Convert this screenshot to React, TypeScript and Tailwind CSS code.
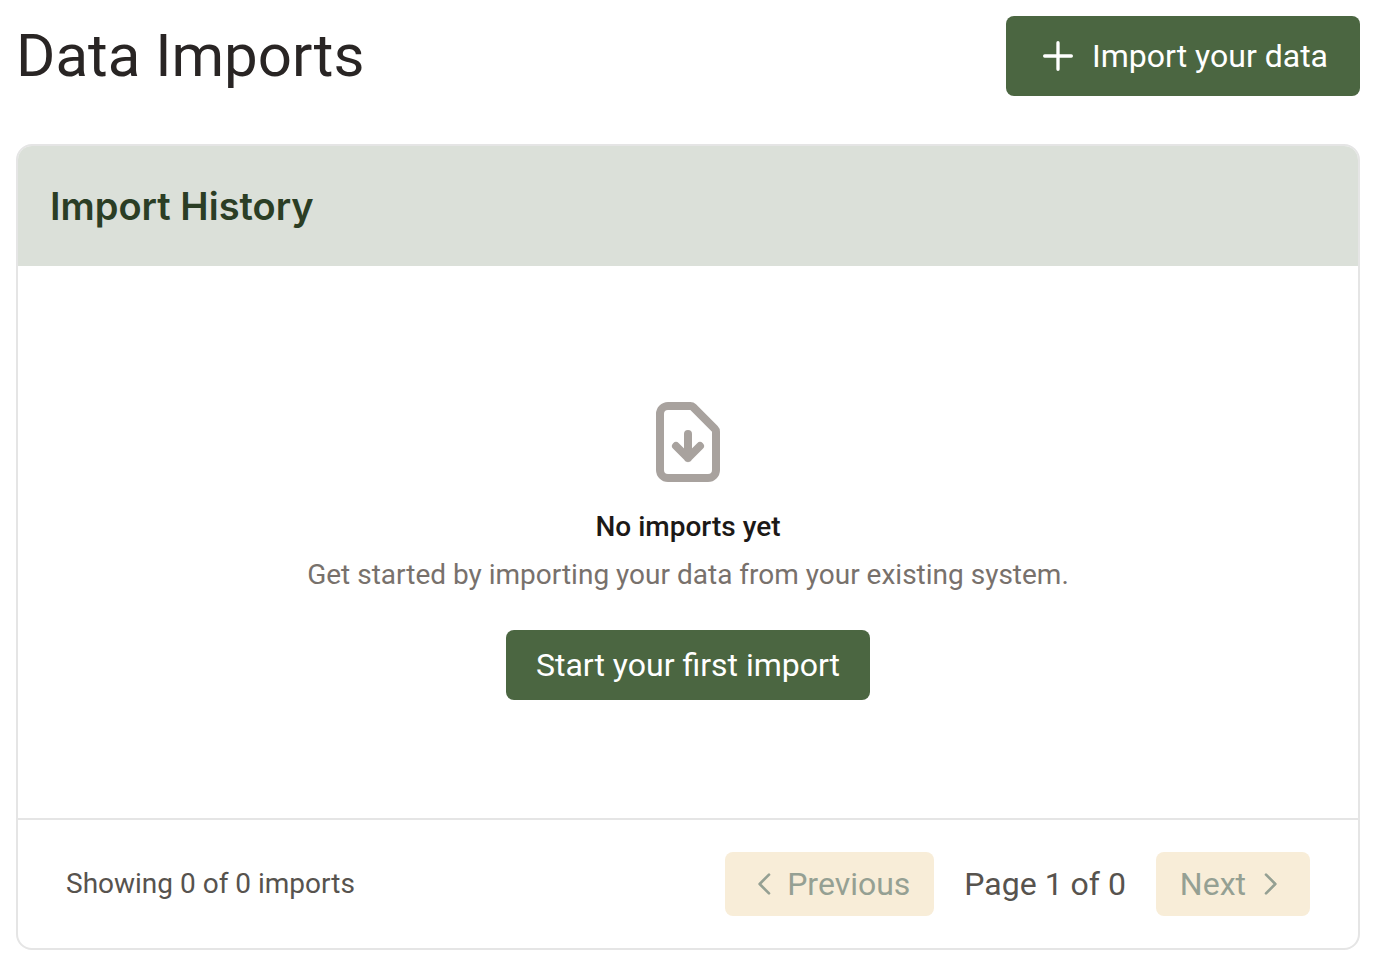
import type { ReactNode } from "react"

function Icon({ className, children }: { className: string; children: ReactNode }) {
  return (
    <svg
      className={className}
      viewBox="0 0 24 24"
      fill="none"
      stroke="currentColor"
      strokeWidth={2}
      strokeLinecap="round"
      strokeLinejoin="round"
      aria-hidden="true"
    >
      {children}
    </svg>
  )
}

function PageHeader() {
  return (
    <header className="flex items-center justify-between gap-8">
      <h1 className="text-[60px] leading-20 text-[#292524]">Data Imports</h1>
      <button
        type="button"
        className="flex h-20 shrink-0 items-center gap-3.5 rounded-lg bg-[#4b6641] px-8 text-[32px] leading-12 text-white hover:bg-[#3f5737]"
      >
        <Icon className="size-10">
          <path d="M12 4v16m8-8H4" />
        </Icon>
        Import your data
      </button>
    </header>
  )
}

function EmptyState() {
  return (
    <div className="flex flex-col items-center px-8 pt-32 pb-[118px] text-center">
      <Icon className="size-24 text-[#a8a29e]">
        <path d="M12 10v6m0 0l-3-3m3 3l3-3m2 8H7a2 2 0 01-2-2V5a2 2 0 012-2h5.586a1 1 0 01.707.293l5.414 5.414a1 1 0 01.293.707V19a2 2 0 01-2 2z" />
      </Icon>
      <h3 className="mt-4 text-[28px] leading-[42px] font-medium text-[#1c1917]">No imports yet</h3>
      <p className="mt-1.5 text-[28px] leading-[42px] text-[#78716c]">
        Get started by importing your data from your existing system.
      </p>
      <button
        type="button"
        className="mt-[34px] h-[70px] rounded-lg bg-[#4b6641] px-[30px] text-[32px] leading-12 text-white hover:bg-[#3f5737]"
      >
        Start your first import
      </button>
    </div>
  )
}

function Pagination() {
  return (
    <div className="flex items-center justify-between border-t-2 border-[#e5e5e5] px-12 py-8">
      <p className="text-[28px] leading-[42px] text-[#57534e]">Showing 0 of 0 imports</p>
      <nav className="flex items-center gap-[30px]" aria-label="Pagination">
        <button
          type="button"
          disabled
          className="flex h-16 items-center gap-1.5 rounded-lg bg-[#f8edd8] px-6 text-[32px] leading-12 text-[#95a093]"
        >
          <Icon className="size-8">
            <path d="M15 19l-7-7 7-7" />
          </Icon>
          Previous
        </button>
        <span className="text-[32px] leading-12 text-[#57534e]">Page 1 of 0</span>
        <button
          type="button"
          disabled
          className="flex h-16 items-center gap-2 rounded-lg bg-[#f8edd8] px-6 text-[32px] leading-12 text-[#95a093]"
        >
          Next
          <Icon className="size-8">
            <path d="M9 5l7 7-7 7" />
          </Icon>
        </button>
      </nav>
    </div>
  )
}

export default function App() {
  return (
    <main className="bg-white p-4 font-['Roboto',sans-serif]">
      <PageHeader />

      {/* Import history card */}
      <section className="mt-12 overflow-hidden rounded-2xl border-2 border-[#e5e5e5] bg-white">
        <div className="bg-[#dbe0d9] p-8">
          <h2 className="font-['Inter',sans-serif] text-[38px] leading-14 font-semibold text-[#2b3e25]">
            Import History
          </h2>
        </div>
        <EmptyState />
        <Pagination />
      </section>
    </main>
  )
}
